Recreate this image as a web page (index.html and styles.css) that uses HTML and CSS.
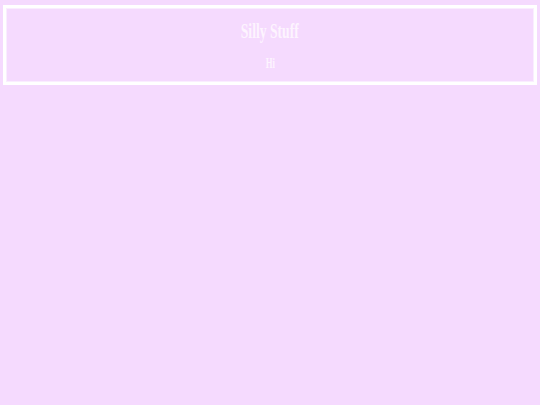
FILE: index.html
```html
<!DOCTYPE html>
<html>
<head>
<meta charset="utf-8">
<link rel="stylesheet" href="styles.css">
</head>
<body>
<header class="banner">
  <h1 class="title"><span>Silly Stuff</span></h1>
  <p class="sub"><span>Hi</span></p>
</header>
</body>
</html>
```
FILE: styles.css
```css
html, body {
  margin: 0;
  padding: 0;
  background: #f5dafe;
  height: 100%;
}
body {
  padding: 5px 3px;
  box-sizing: border-box;
  font-family: "Liberation Serif", serif;
}
.banner {
  border: 3px solid #ffffff;
  box-shadow: inset 0 0 0 1px rgba(255,255,255,0.5);
  height: 80px;
  box-sizing: border-box;
  text-align: center;
  padding-top: 12px;
}
.title {
  margin: 0;
  font-size: 22px;
  line-height: 22px;
  font-weight: bold;
  color: #fdf4fe;
}
.title span, .sub span {
  display: inline-block;
  transform: scaleX(0.62);
}
.sub {
  margin: 15px 0 0;
  font-size: 14px;
  line-height: 14px;
  font-weight: bold;
  color: #fdf4fe;
}
```
